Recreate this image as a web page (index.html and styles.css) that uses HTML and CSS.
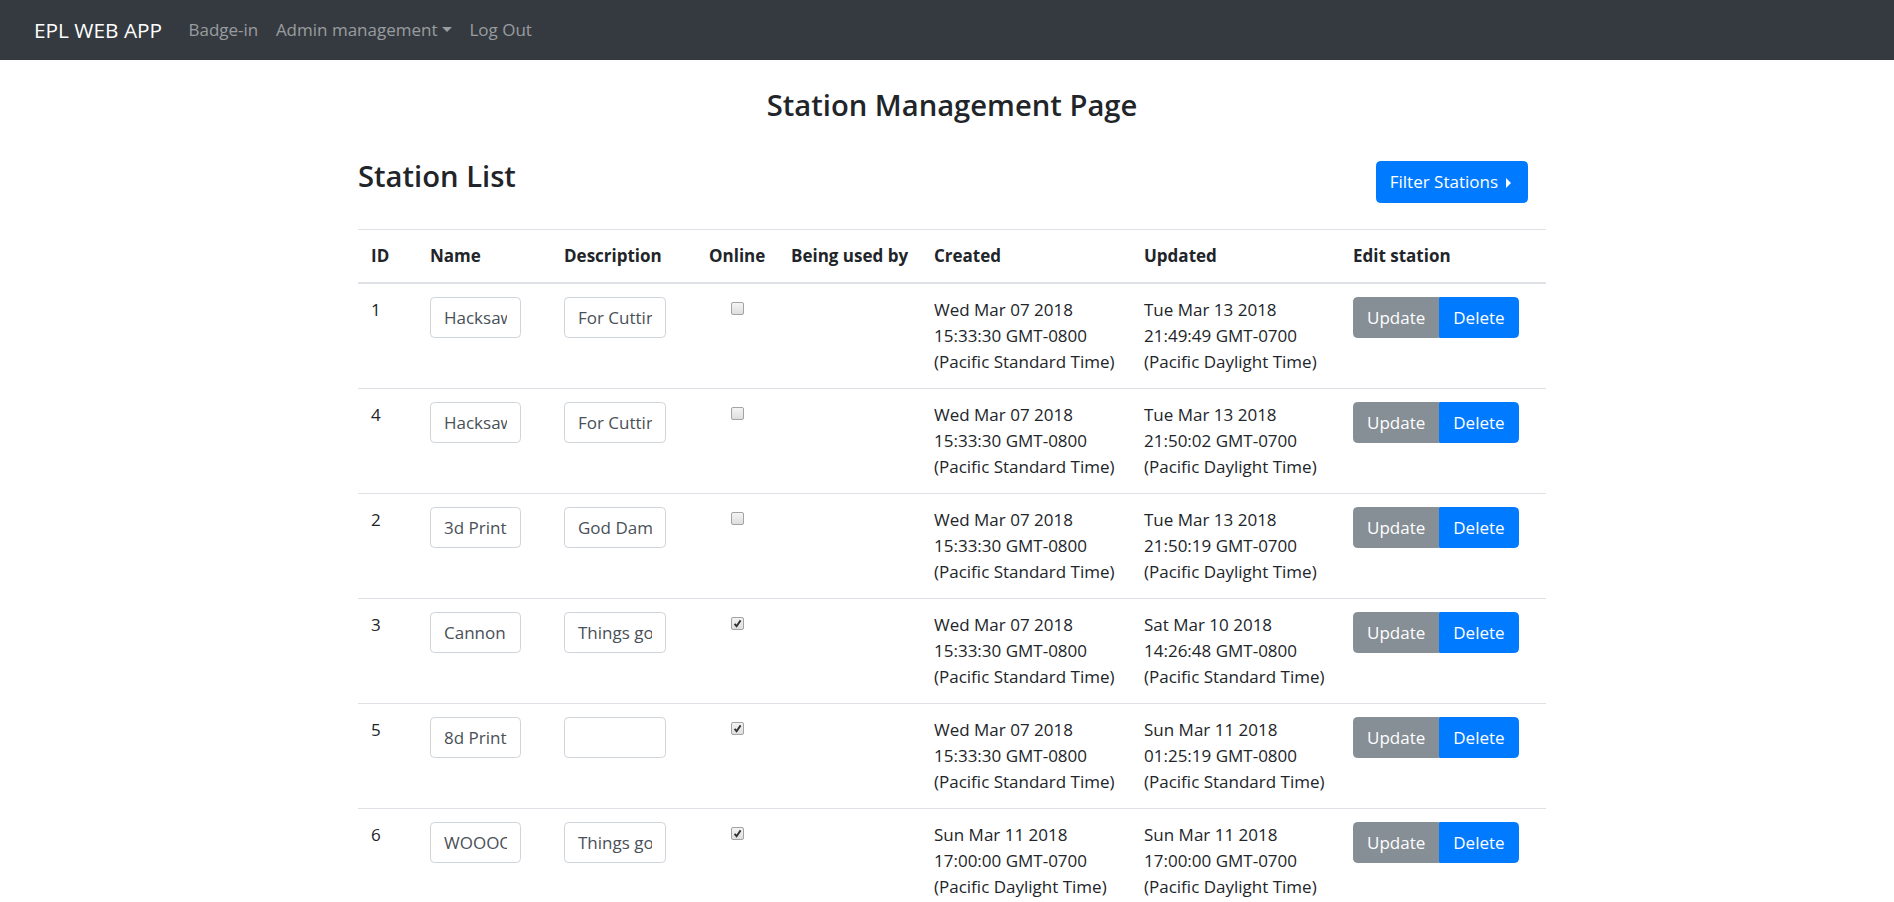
FILE: index.html
```html
<!DOCTYPE html>
<html>
<head>
  <meta charset="UTF-8">
  <meta name="viewport" content="width=device-width, initial-scale=1.0">
  <title>Station Management</title>
  <link rel="stylesheet" href="styles.css">
</head>
<body>
  <nav class="navbar">
    <a class="navbar-brand" href="#">EPL WEB APP</a>
    <ul class="navbar-nav">
      <li><a class="nav-link" href="#">Badge-in</a></li>
      <li><a class="nav-link dropdown-toggle" href="#">Admin management</a></li>
      <li><a class="nav-link" href="#">Log Out</a></li>
    </ul>
  </nav>

  <main class="station-page">
    <h3 class="page-title">Station Management Page</h3>

    <div class="list-header">
      <h3 class="list-title">Station List</h3>
      <button class="btn btn-primary btn-filter" type="button">Filter Stations</button>
    </div>

    <table class="table">
      <colgroup>
        <col class="col-id">
        <col class="col-name">
        <col class="col-desc">
        <col class="col-online">
        <col class="col-user">
        <col class="col-date">
        <col class="col-date-2">
        <col class="col-edit">
      </colgroup>
      <thead>
        <tr>
          <th>ID</th>
          <th>Name</th>
          <th>Description</th>
          <th>Online</th>
          <th>Being used by</th>
          <th>Created</th>
          <th>Updated</th>
          <th>Edit station</th>
        </tr>
      </thead>
      <tbody>
        <tr>
          <td>1</td>
          <td><input class="form-control name-input" type="text" value="Hacksaw"></td>
          <td><input class="form-control desc-input" type="text" value="For Cutting things"></td>
          <td><input class="online-check" type="checkbox"></td>
          <td></td>
          <td class="date">Wed Mar 07 2018<br>15:33:30 GMT-0800<br>(Pacific Standard Time)</td>
          <td class="date">Tue Mar 13 2018<br>21:49:49 GMT-0700<br>(Pacific Daylight Time)</td>
          <td><div class="btn-group"><button class="btn btn-secondary" type="button">Update</button><button class="btn btn-primary" type="button">Delete</button></div></td>
        </tr>
        <tr>
          <td>4</td>
          <td><input class="form-control name-input" type="text" value="Hacksaw"></td>
          <td><input class="form-control desc-input" type="text" value="For Cutting things"></td>
          <td><input class="online-check" type="checkbox"></td>
          <td></td>
          <td class="date">Wed Mar 07 2018<br>15:33:30 GMT-0800<br>(Pacific Standard Time)</td>
          <td class="date">Tue Mar 13 2018<br>21:50:02 GMT-0700<br>(Pacific Daylight Time)</td>
          <td><div class="btn-group"><button class="btn btn-secondary" type="button">Update</button><button class="btn btn-primary" type="button">Delete</button></div></td>
        </tr>
        <tr>
          <td>2</td>
          <td><input class="form-control name-input" type="text" value="3d Printer"></td>
          <td><input class="form-control desc-input" type="text" value="God Damn"></td>
          <td><input class="online-check" type="checkbox"></td>
          <td></td>
          <td class="date">Wed Mar 07 2018<br>15:33:30 GMT-0800<br>(Pacific Standard Time)</td>
          <td class="date">Tue Mar 13 2018<br>21:50:19 GMT-0700<br>(Pacific Daylight Time)</td>
          <td><div class="btn-group"><button class="btn btn-secondary" type="button">Update</button><button class="btn btn-primary" type="button">Delete</button></div></td>
        </tr>
        <tr>
          <td>3</td>
          <td><input class="form-control name-input" type="text" value="Cannon"></td>
          <td><input class="form-control desc-input" type="text" value="Things go boom"></td>
          <td><input class="online-check" type="checkbox" checked></td>
          <td></td>
          <td class="date">Wed Mar 07 2018<br>15:33:30 GMT-0800<br>(Pacific Standard Time)</td>
          <td class="date">Sat Mar 10 2018<br>14:26:48 GMT-0800<br>(Pacific Standard Time)</td>
          <td><div class="btn-group"><button class="btn btn-secondary" type="button">Update</button><button class="btn btn-primary" type="button">Delete</button></div></td>
        </tr>
        <tr>
          <td>5</td>
          <td><input class="form-control name-input" type="text" value="8d Printer"></td>
          <td><input class="form-control desc-input" type="text" value=""></td>
          <td><input class="online-check" type="checkbox" checked></td>
          <td></td>
          <td class="date">Wed Mar 07 2018<br>15:33:30 GMT-0800<br>(Pacific Standard Time)</td>
          <td class="date">Sun Mar 11 2018<br>01:25:19 GMT-0800<br>(Pacific Standard Time)</td>
          <td><div class="btn-group"><button class="btn btn-secondary" type="button">Update</button><button class="btn btn-primary" type="button">Delete</button></div></td>
        </tr>
        <tr>
          <td>6</td>
          <td><input class="form-control name-input" type="text" value="WOOOOOO"></td>
          <td><input class="form-control desc-input" type="text" value="Things go boom"></td>
          <td><input class="online-check" type="checkbox" checked></td>
          <td></td>
          <td class="date">Sun Mar 11 2018<br>17:00:00 GMT-0700<br>(Pacific Daylight Time)</td>
          <td class="date">Sun Mar 11 2018<br>17:00:00 GMT-0700<br>(Pacific Daylight Time)</td>
          <td><div class="btn-group"><button class="btn btn-secondary" type="button">Update</button><button class="btn btn-primary" type="button">Delete</button></div></td>
        </tr>
      </tbody>
    </table>
  </main>
</body>
</html>
```

FILE: styles.css
```css
body {
  margin: 0;
  font-family: "Open Sans", "Noto Sans", sans-serif;
  font-size: 17px;
  line-height: 26px;
  color: #212529;
  background: #fff;
}

/* top bar */
.navbar {
  display: flex;
  align-items: center;
  height: 60px;
  padding: 0 34px;
  background: #343a40;
}
.navbar-brand {
  margin-right: 17.6px;
  font-size: 20.8px;
  line-height: 33px;
  color: #fff;
  text-decoration: none;
}
.navbar-nav {
  display: flex;
  margin: 0;
  padding: 0;
  list-style: none;
}
.nav-link {
  display: block;
  padding: 0 8.8px;
  color: rgba(255, 255, 255, 0.5);
  text-decoration: none;
}
.dropdown-toggle::after {
  content: "";
  display: inline-block;
  margin-left: 0.255em;
  vertical-align: 0.255em;
  border-top: 0.3em solid;
  border-right: 0.3em solid transparent;
  border-left: 0.3em solid transparent;
}

/* page body */
.station-page {
  width: 1188px;
  margin: 0 auto;
  padding-left: 10px;
}
.page-title,
.list-title {
  margin: 0;
  font-size: 29.2px;
  font-weight: 600;
  line-height: 1.2;
}
.page-title {
  margin-top: 28px;
  text-align: center;
}
.list-header {
  display: flex;
  justify-content: space-between;
  align-items: flex-start;
  margin: 36px 0 26px;
}

/* buttons */
.btn {
  height: 41px;
  padding: 0 13px;
  border: 1px solid transparent;
  border-radius: 4.4px;
  font: inherit;
  color: #fff;
  cursor: pointer;
}
.btn-primary {
  background: #007bff;
  border-color: #007bff;
}
.btn-secondary {
  background: #868e96;
  border-color: #868e96;
}
.btn-filter {
  height: 42px;
  margin: 2px 18px 0 0;
  padding: 0 16px 0 13px;
}
.btn-filter::after {
  content: "";
  display: inline-block;
  margin-left: 8px;
  vertical-align: 0;
  border-left: 0.3em solid;
  border-top: 0.3em solid transparent;
  border-bottom: 0.3em solid transparent;
}
.btn-group {
  display: inline-flex;
}
.btn-group .btn:first-child {
  border-top-right-radius: 0;
  border-bottom-right-radius: 0;
}
.btn-group .btn:last-child {
  border-top-left-radius: 0;
  border-bottom-left-radius: 0;
}

/* station table */
.table {
  width: 100%;
  border-collapse: collapse;
  table-layout: fixed;
}
.col-id { width: 59px; }
.col-name { width: 134px; }
.col-desc { width: 145px; }
.col-online { width: 82px; }
.col-user { width: 143px; }
.col-date { width: 210px; }
.col-date-2 { width: 209px; }
.col-edit { width: 206px; }

.table th,
.table td {
  padding: 13px;
  border-top: 1px solid #dee2e6;
  text-align: left;
  vertical-align: top;
}
.table thead th {
  border-bottom: 2px solid #dee2e6;
  vertical-align: bottom;
  font-weight: 700;
  white-space: nowrap;
}
.table .date {
  white-space: nowrap;
}

.form-control {
  display: block;
  box-sizing: border-box;
  height: 41px;
  padding: 0 13px;
  border: 1px solid #ced4da;
  border-radius: 4.4px;
  font: inherit;
  color: #495057;
  background: #fff;
}
.name-input { width: 91px; }
.desc-input { width: 102px; }

.online-check {
  -webkit-appearance: none;
  appearance: none;
  display: block;
  box-sizing: border-box;
  width: 13px;
  height: 13px;
  margin: 5px auto 0;
  border: 1px solid #a3a3a3;
  border-radius: 2px;
  background: linear-gradient(#f4f4f4, #dedede);
}
.online-check:checked {
  background:
    url("data:image/svg+xml,%3Csvg xmlns='http://www.w3.org/2000/svg' viewBox='0 0 11 11'%3E%3Cpath d='M2.6 5.8 4.6 8.2 8.6 2.4' fill='none' stroke='%23333' stroke-width='1.9'/%3E%3C/svg%3E") center / 11px 11px no-repeat,
    linear-gradient(#f4f4f4, #dedede);
}
```
